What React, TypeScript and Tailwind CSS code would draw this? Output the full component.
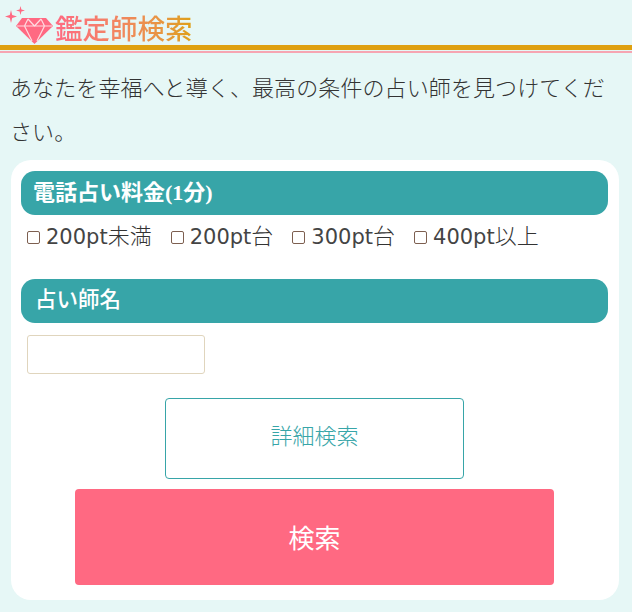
import React from 'react';

const font = { fontFamily: '"Noto Sans CJK JP", "Noto Sans", sans-serif' };

const prices = [
  { pt: '200pt', suffix: '未満' },
  { pt: '200pt', suffix: '台' },
  { pt: '300pt', suffix: '台' },
  { pt: '400pt', suffix: '以上' },
];

const GemIcon = () => (
  <svg width="55" height="45" viewBox="0 0 55 45" className="block shrink-0">
    <path d="M11 10 L12.200 15 L17 16.500 L12.200 18 L11 23 L9.800 18 L5 16.500 L9.800 15 Z" fill="#ff6982" />
    <path d="M20.500 6 L21.400 9.600 L25 10.500 L21.400 11.400 L20.500 15 L19.600 11.400 L16 10.500 L19.600 9.600 Z" fill="#ff6982" />
    <path d="M22 18 H46 L53 26 L34.500 44 L16 26 Z" fill="#ff6982" />
    <path d="M28 19 L24.500 26 L32 41 M41 19 L44.500 26 L37 41 M17 26 H52 M28 19 L34.500 26 L41 19" stroke="#ffd9df" strokeWidth="1.2" fill="none" />
  </svg>
);

export default function App() {
  return (
    <div className="w-[632px] h-[612px] bg-[#e6f7f6] overflow-hidden text-[#333]" style={font}>
      <div className="h-[45px] flex items-end">
        <GemIcon />
        <h2 className="text-[27.500px] leading-[40px] mt-[2px] font-medium text-transparent bg-clip-text bg-gradient-to-r from-[#ff6982] to-[#dfa010] translate-y-[2px]">
          鑑定師検索
        </h2>
      </div>
      <div className="h-[5px] bg-[#dfa010]" />
      <div className="h-[2px] mt-px bg-[#f6a5b2]" />
      <p className="pl-[10px] pr-[11px] mt-[11px] w-[616px] text-[22px] leading-[44px] tracking-[0.1px] font-light">
        あなたを幸福へと導く、最高の条件の占い師を見つけてください。
      </p>
      <div className="ml-[11px] mt-[8px] w-[608px] h-[440px] bg-white rounded-[20px] pl-[10px] pr-[11px] pt-[11px]">
        <div
          className="h-[44px] pb-[2px] bg-[#37a5a8] rounded-[14px] pl-[12px] flex items-center text-white text-[22px] font-bold"
          style={{ fontFamily: '"Liberation Serif", "Noto Sans CJK JP", serif' }}
        >
          電話占い料金(1分)
        </div>
        <div className="flex items-center h-[44px] pb-[3px] pl-[6px]">
          {prices.map((p) => (
            <label key={p.pt + p.suffix} className="flex items-center mr-[19px] text-[22px] leading-none">
              <input
                type="checkbox"
                className="appearance-none w-[13px] h-[13px] mr-[6px] mt-[3px] bg-white border border-[#7d5f50] rounded-[2px]"
              />
              <span className="flex items-baseline">
                <span className="text-[21px] text-[#444]" style={{ fontFamily: '"DejaVu Sans", sans-serif' }}>{p.pt}</span>
                <span className="font-light">{p.suffix}</span>
              </span>
            </label>
          ))}
        </div>
        <div className="h-[44px] pb-[5px] mt-[20px] bg-[#37a5a8] rounded-[14px] pl-[14px] flex items-center text-white text-[21.500px] font-medium">
          占い師名
        </div>
        <input
          type="text"
          className="block w-[178px] h-[39px] ml-[6px] mt-[12px] bg-white border border-[#e0d5bd] rounded-[3px]"
        />
        <div className="flex justify-center mt-[24px]">
          <button className="w-[299px] h-[81px] pb-[8px] border border-[#37a5a8] rounded-[4px] bg-white text-[#37a5a8] text-[22px] font-light">
            詳細検索
          </button>
        </div>
        <div className="flex justify-center mt-[10px]">
          <button className="w-[479px] h-[96px] pb-[2px] rounded-[4px] bg-[#ff6982] text-white text-[26px]">
            検索
          </button>
        </div>
      </div>
    </div>
  );
}
